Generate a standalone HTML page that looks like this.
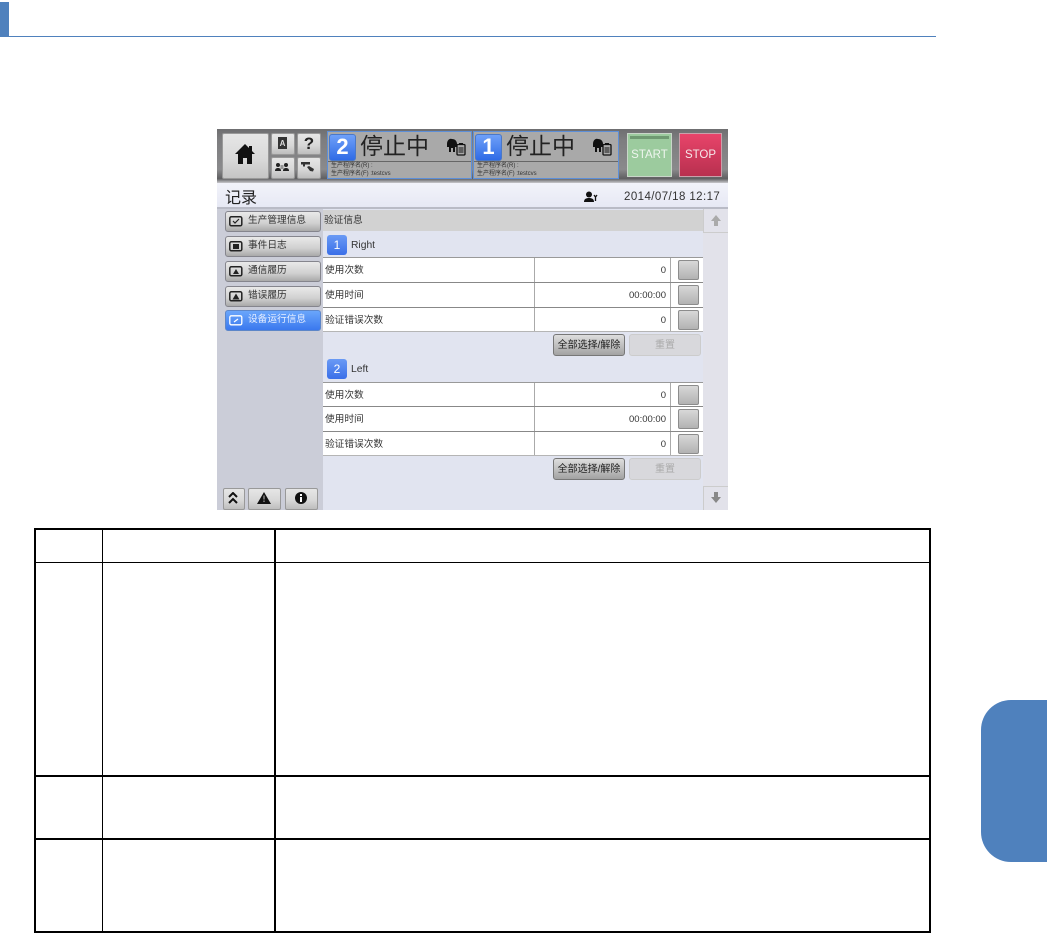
<!DOCTYPE html>
<html><head><meta charset="utf-8">
<style>
html,body{margin:0;padding:0;background:#fff}
body{width:1047px;height:933px;position:relative;overflow:hidden;font-family:"Liberation Sans","Noto Sans CJK SC",sans-serif;color:#222}
.a,.a *{box-sizing:border-box}
.a{position:absolute}
.k{position:absolute;background:#000}
.btn{position:absolute;border:1px solid #999;border-radius:2px;background:linear-gradient(#e6e6e6,#d8d8d8 55%,#bdbdbd)}
.side{position:absolute;left:225px;width:96px;height:21px;border:1px solid #85858d;border-radius:3px;background:linear-gradient(#e9e9e9,#d0d0d0 60%,#aaa);font-size:9.700px;line-height:18px;padding-left:22px;color:#333;box-sizing:border-box}
.side svg{position:absolute;left:3px;top:3px}
.row{position:absolute;left:323px;width:380px;height:25px;background:#fff;border-bottom:1px solid #888;font-size:9.700px;line-height:25px;padding-left:2px;box-sizing:border-box;color:#333}
.row i{position:absolute;top:0;bottom:0;width:1px;background:#aaa}
.row b{position:absolute;right:37px;font-weight:400;font-size:9.500px;top:0}
.row u{position:absolute;left:355px;top:2px;width:19px;height:18px;border:1px solid #8c8c8c;border-radius:2px;background:linear-gradient(#d8d8d8,#b2b2b2)}
.num{position:absolute;left:327px;width:20px;height:20px;border-radius:3px;background:linear-gradient(#6a9af5,#3a6fe8);color:#fff;font-size:12px;line-height:20px;text-align:center}
.lbl{position:absolute;left:351px;font-size:10.300px;line-height:12px;color:#333}
.b1,.b2{position:absolute;height:22px;border-radius:3px;font-size:10px;line-height:21px;text-align:center;box-sizing:border-box}
.b1{left:553px;width:72px;border:1px solid #777;background:linear-gradient(#ddd,#bbb 60%,#a2a2a2);color:#222}
.b2{left:629px;width:72px;border:1px solid #ccc;background:#d8d8dc;color:#aaa}
.panel{position:absolute;top:131px;height:48px;border:1px solid #5d8fd8;background:#a9a9a9;box-sizing:border-box}
.panel .d{position:absolute;left:1px;top:2px;width:25px;height:25px;border-radius:3px;background:linear-gradient(#6fa0f8,#2f6be6);color:#fff;font-size:22px;font-weight:700;line-height:24px;text-align:center;border:1px solid #4a78c8}
.panel .t{position:absolute;left:32px;top:0;font-size:23px;line-height:29px;color:#222;white-space:nowrap}
.panel .l{position:absolute;left:0;right:0;top:29px;height:1px;background:#666}
.panel .s{position:absolute;left:3px;top:30px;font-size:6px;line-height:8px;color:#333;white-space:nowrap}
.panel svg{position:absolute;left:118px;top:6px}
</style></head><body>

<div class="a" style="left:0;top:2px;width:9px;height:34px;background:#4f81bd"></div>
<div class="a" style="left:0;top:36px;width:936px;height:1px;background:#4f81bd"></div>
<div class="a" style="left:981px;top:700px;width:66px;height:162px;background:#4f81bd;border-radius:30px 0 0 30px"></div>

<!-- HMI -->
<div class="a" style="left:217px;top:129px;width:511px;height:381px;background:#e1e4f0;overflow:hidden"></div>
<div class="a" style="left:217px;top:129px;width:511px;height:54px;background:linear-gradient(#6e6e70,#7d7d7f 20%,#8a8a8c 75%,#5f5f61 92%,#c8c8cc)"></div>
<div class="a" style="left:217px;top:183px;width:511px;height:25px;background:linear-gradient(#f2f3fa,#e6e8f4)"></div>
<div class="a" style="left:217px;top:207px;width:511px;height:2px;background:#b9bbc6"></div>
<div class="a" style="left:225px;top:188px;font-size:16px;line-height:22px;color:#222">记录</div>
<div class="a" style="left:624px;top:189px;font-size:11.500px;line-height:16px;letter-spacing:.42px;color:#333;white-space:nowrap">2014/07/18 12:17</div>
<svg class="a" style="left:584px;top:191px" width="14" height="12" viewBox="0 0 14 12"><circle cx="5" cy="3.500" r="3" fill="#111"/><path d="M0 11c0-3 2-4 5-4s5 1 5 4z" fill="#111"/><path d="M10 4l1.500 2 1.500-2M11.500 6v4" stroke="#111" stroke-width="1.300" fill="none"/></svg>

<!-- header buttons -->
<div class="btn" style="left:222px;top:133px;width:45px;height:44px;background:linear-gradient(#e6e6e6,#d8d8d8 60%,#c4c4c4)"></div>
<svg class="a" style="left:235px;top:144px" width="20" height="20" viewBox="0 0 20 20"><path d="M10 0L0 10h3v10h5v-6h4v6h5V10h3l-3-3V2h-3v2z" fill="#111"/></svg>
<div class="btn" style="left:271px;top:133px;width:22px;height:20px"></div>
<div class="a" style="left:278px;top:137px;width:9px;height:12px;background:#333;color:#ddd;font-size:8px;line-height:14px;text-align:center;font-weight:700">A</div>
<div class="btn" style="left:297px;top:133px;width:22px;height:20px;text-align:center;font-weight:700;font-size:17px;line-height:19px;color:#222">?</div>
<div class="btn" style="left:271px;top:157px;width:22px;height:20px"></div>
<svg class="a" style="left:275px;top:163px" width="14" height="8" viewBox="0 0 14 8"><circle cx="3" cy="2" r="2" fill="#222"/><circle cx="11" cy="2" r="2" fill="#222"/><path d="M0 8c0-2 1-3 3-3s3 1 3 3zM8 8c0-2 1-3 3-3s3 1 3 3z" fill="#222"/><path d="M5.500 3h3M5.500 5h3" stroke="#222" stroke-width=".8"/></svg>
<div class="btn" style="left:297px;top:157px;width:22px;height:20px"></div>
<svg class="a" style="left:301px;top:162px" width="14" height="10" viewBox="0 0 14 10"><path d="M0 0h9v2.500H0zM2 2.500h2v2H2zM6 5l2-1 5 3-1 2.500-3-.5z" fill="#333"/></svg>

<div class="panel" style="left:327px;width:145px"><div class="d">2</div><div class="t">停止中</div><div class="l"></div><div class="s">生产程序名(R) :<br>生产程序名(F) :testcvs</div>
<svg width="20" height="18" viewBox="0 0 20 18"><path d="M1 6C1 2 4 0 6 1c3 0 5 2 5 5v3H9v5H7v-4H5v4H3V9H1z" fill="#111"/><rect x="11" y="6.500" width="8" height="10.500" rx="1" fill="none" stroke="#111" stroke-width="1.300"/><path d="M13 5.500h4M12.500 10h5M12.500 12h5M12.500 14h5" stroke="#111"/></svg></div>
<div class="panel" style="left:473px;width:146px"><div class="d">1</div><div class="t">停止中</div><div class="l"></div><div class="s">生产程序名(R) :<br>生产程序名(F) :testcvs</div>
<svg width="20" height="18" viewBox="0 0 20 18"><path d="M1 6C1 2 4 0 6 1c3 0 5 2 5 5v3H9v5H7v-4H5v4H3V9H1z" fill="#111"/><rect x="11" y="6.500" width="8" height="10.500" rx="1" fill="none" stroke="#111" stroke-width="1.300"/><path d="M13 5.500h4M12.500 10h5M12.500 12h5M12.500 14h5" stroke="#111"/></svg></div>

<div class="a" style="left:627px;top:133px;width:45px;height:44px;background:#9ccb9e;border:1px solid #c9d6c9;color:#eef5ee;font-size:11.500px;line-height:42px;text-align:center"><div style="position:absolute;left:2px;right:2px;top:2px;height:3px;background:#6f9a72"></div>START</div>
<div class="a" style="left:679px;top:133px;width:43px;height:44px;background:linear-gradient(#e8446a,#b8304f);border:1px solid #c9a0aa;color:#f5e8ea;font-size:11.500px;line-height:42px;text-align:center">STOP</div>

<!-- sidebar -->
<div class="a" style="left:217px;top:209px;width:106px;height:301px;background:#cbcdd8"></div>
<div class="side" style="top:211px"><svg width="14" height="12" viewBox="0 0 14 12"><rect x=".8" y="1.800" width="12" height="9" rx="1.500" fill="none" stroke="#222" stroke-width="1.500"/><path d="M4 6l2 2 4-4" stroke="#222" fill="none" stroke-width="1.200"/></svg>生产管理信息</div>
<div class="side" style="top:236px"><svg width="14" height="12" viewBox="0 0 14 12"><rect x=".8" y="1.800" width="12" height="9" rx="1.500" fill="none" stroke="#222" stroke-width="1.500"/><rect x="4" y="4" width="6" height="5" fill="#222"/></svg>事件日志</div>
<div class="side" style="top:261px"><svg width="14" height="12" viewBox="0 0 14 12"><rect x=".8" y="1.800" width="12" height="9" rx="1.500" fill="none" stroke="#222" stroke-width="1.500"/><path d="M4 9l3-5 3 5z" fill="#222"/></svg>通信履历</div>
<div class="side" style="top:286px"><svg width="14" height="12" viewBox="0 0 14 12"><rect x=".8" y="1.800" width="12" height="9" rx="1.500" fill="none" stroke="#222" stroke-width="1.500"/><path d="M3.500 9.500l3.500-6 3.500 6z" fill="#222"/></svg>错误履历</div>
<div class="side" style="top:310px;background:linear-gradient(#6aa6fb,#3a78ee);border-color:#5d86c8;color:#e8f0ff"><svg width="14" height="12" viewBox="0 0 14 12"><rect x=".8" y="1.800" width="12" height="9" rx="1.500" fill="none" stroke="#fff" stroke-width="1.300"/><path d="M5 8l4-3" stroke="#fff" stroke-width="1.200"/></svg>设备运行信息</div>

<div class="btn" style="left:223px;top:488px;width:20px;height:20px"></div>
<svg class="a" style="left:228px;top:492px" width="10" height="12" viewBox="0 0 10 12"><path d="M1 5l4-4 4 4M1 11l4-4 4 4" stroke="#111" stroke-width="2" fill="none"/></svg>
<div class="btn" style="left:248px;top:488px;width:31px;height:20px"></div>
<svg class="a" style="left:257px;top:492px" width="14" height="12" viewBox="0 0 14 12"><path d="M7 0l7 12H0z" fill="#111"/><path d="M7 3.500v4M7 8.500v1.500" stroke="#bbb"/></svg>
<div class="btn" style="left:285px;top:488px;width:31px;height:20px"></div>
<svg class="a" style="left:295px;top:492px" width="12" height="12" viewBox="0 0 12 12"><circle cx="6" cy="6" r="6" fill="#111"/><rect x="5" y="5" width="2" height="5" fill="#fff"/><rect x="5" y="2" width="2" height="2" fill="#fff"/></svg>

<!-- scrollbar -->
<div class="a" style="left:703px;top:209px;width:25px;height:301px;background:#e2e2ea"></div>
<div class="a" style="left:703px;top:209px;width:25px;height:24px;border-bottom:1px solid #ccc;border-left:1px solid #ccc"></div>
<div class="a" style="left:703px;top:486px;width:25px;height:24px;border-top:1px solid #ccc;border-left:1px solid #ccc"></div>
<svg class="a" style="left:710px;top:214px" width="12" height="13" viewBox="0 0 12 13"><path d="M6 1l5 6H8v5H4V7H1z" fill="#aaa"/></svg>
<svg class="a" style="left:710px;top:491px" width="12" height="13" viewBox="0 0 12 13"><path d="M6 12l5-6H8V1H4v5H1z" fill="#888"/></svg>

<!-- content -->
<div class="a" style="left:323px;top:210px;width:380px;height:21px;background:#d2d2d2;font-size:9.700px;line-height:21px;padding-left:1px;color:#333">验证信息</div>

<div class="num" style="top:235px">1</div><div class="lbl" style="top:240px">Right</div>
<div class="a" style="left:323px;top:257px;width:380px;height:1px;background:#999"></div>
<div class="row" style="top:258px">使用次数<i style="left:211px"></i><i style="left:347px"></i><b>0</b><u></u></div>
<div class="row" style="top:283px">使用时间<i style="left:211px"></i><i style="left:347px"></i><b>00:00:00</b><u></u></div>
<div class="row" style="top:308px;border-bottom-color:#b5b5b5;height:24px">验证错误次数<i style="left:211px"></i><i style="left:347px"></i><b>0</b><u></u></div>
<div class="b1" style="top:334px">全部选择/解除</div><div class="b2" style="top:334px">重置</div>

<div class="num" style="top:359px">2</div><div class="lbl" style="top:364px">Left</div>
<div class="a" style="left:323px;top:382px;width:380px;height:1px;background:#999"></div>
<div class="row" style="top:383px;height:24px">使用次数<i style="left:211px"></i><i style="left:347px"></i><b>0</b><u></u></div>
<div class="row" style="top:407px">使用时间<i style="left:211px"></i><i style="left:347px"></i><b>00:00:00</b><u></u></div>
<div class="row" style="top:432px;border-bottom-color:#b5b5b5;height:24px">验证错误次数<i style="left:211px"></i><i style="left:347px"></i><b>0</b><u></u></div>
<div class="b1" style="top:458px">全部选择/解除</div><div class="b2" style="top:458px">重置</div>

<!-- table lines -->
<div class="k" style="left:34px;top:528px;width:897px;height:2px"></div>
<div class="k" style="left:34px;top:562px;width:897px;height:1px"></div>
<div class="k" style="left:34px;top:775px;width:897px;height:2px"></div>
<div class="k" style="left:34px;top:838px;width:897px;height:2px"></div>
<div class="k" style="left:34px;top:931px;width:897px;height:2px"></div>
<div class="k" style="left:34px;top:528px;width:2px;height:405px"></div>
<div class="k" style="left:102px;top:528px;width:1px;height:405px"></div>
<div class="k" style="left:274px;top:528px;width:2px;height:405px"></div>
<div class="k" style="left:929px;top:528px;width:2px;height:405px"></div>
</body></html>
